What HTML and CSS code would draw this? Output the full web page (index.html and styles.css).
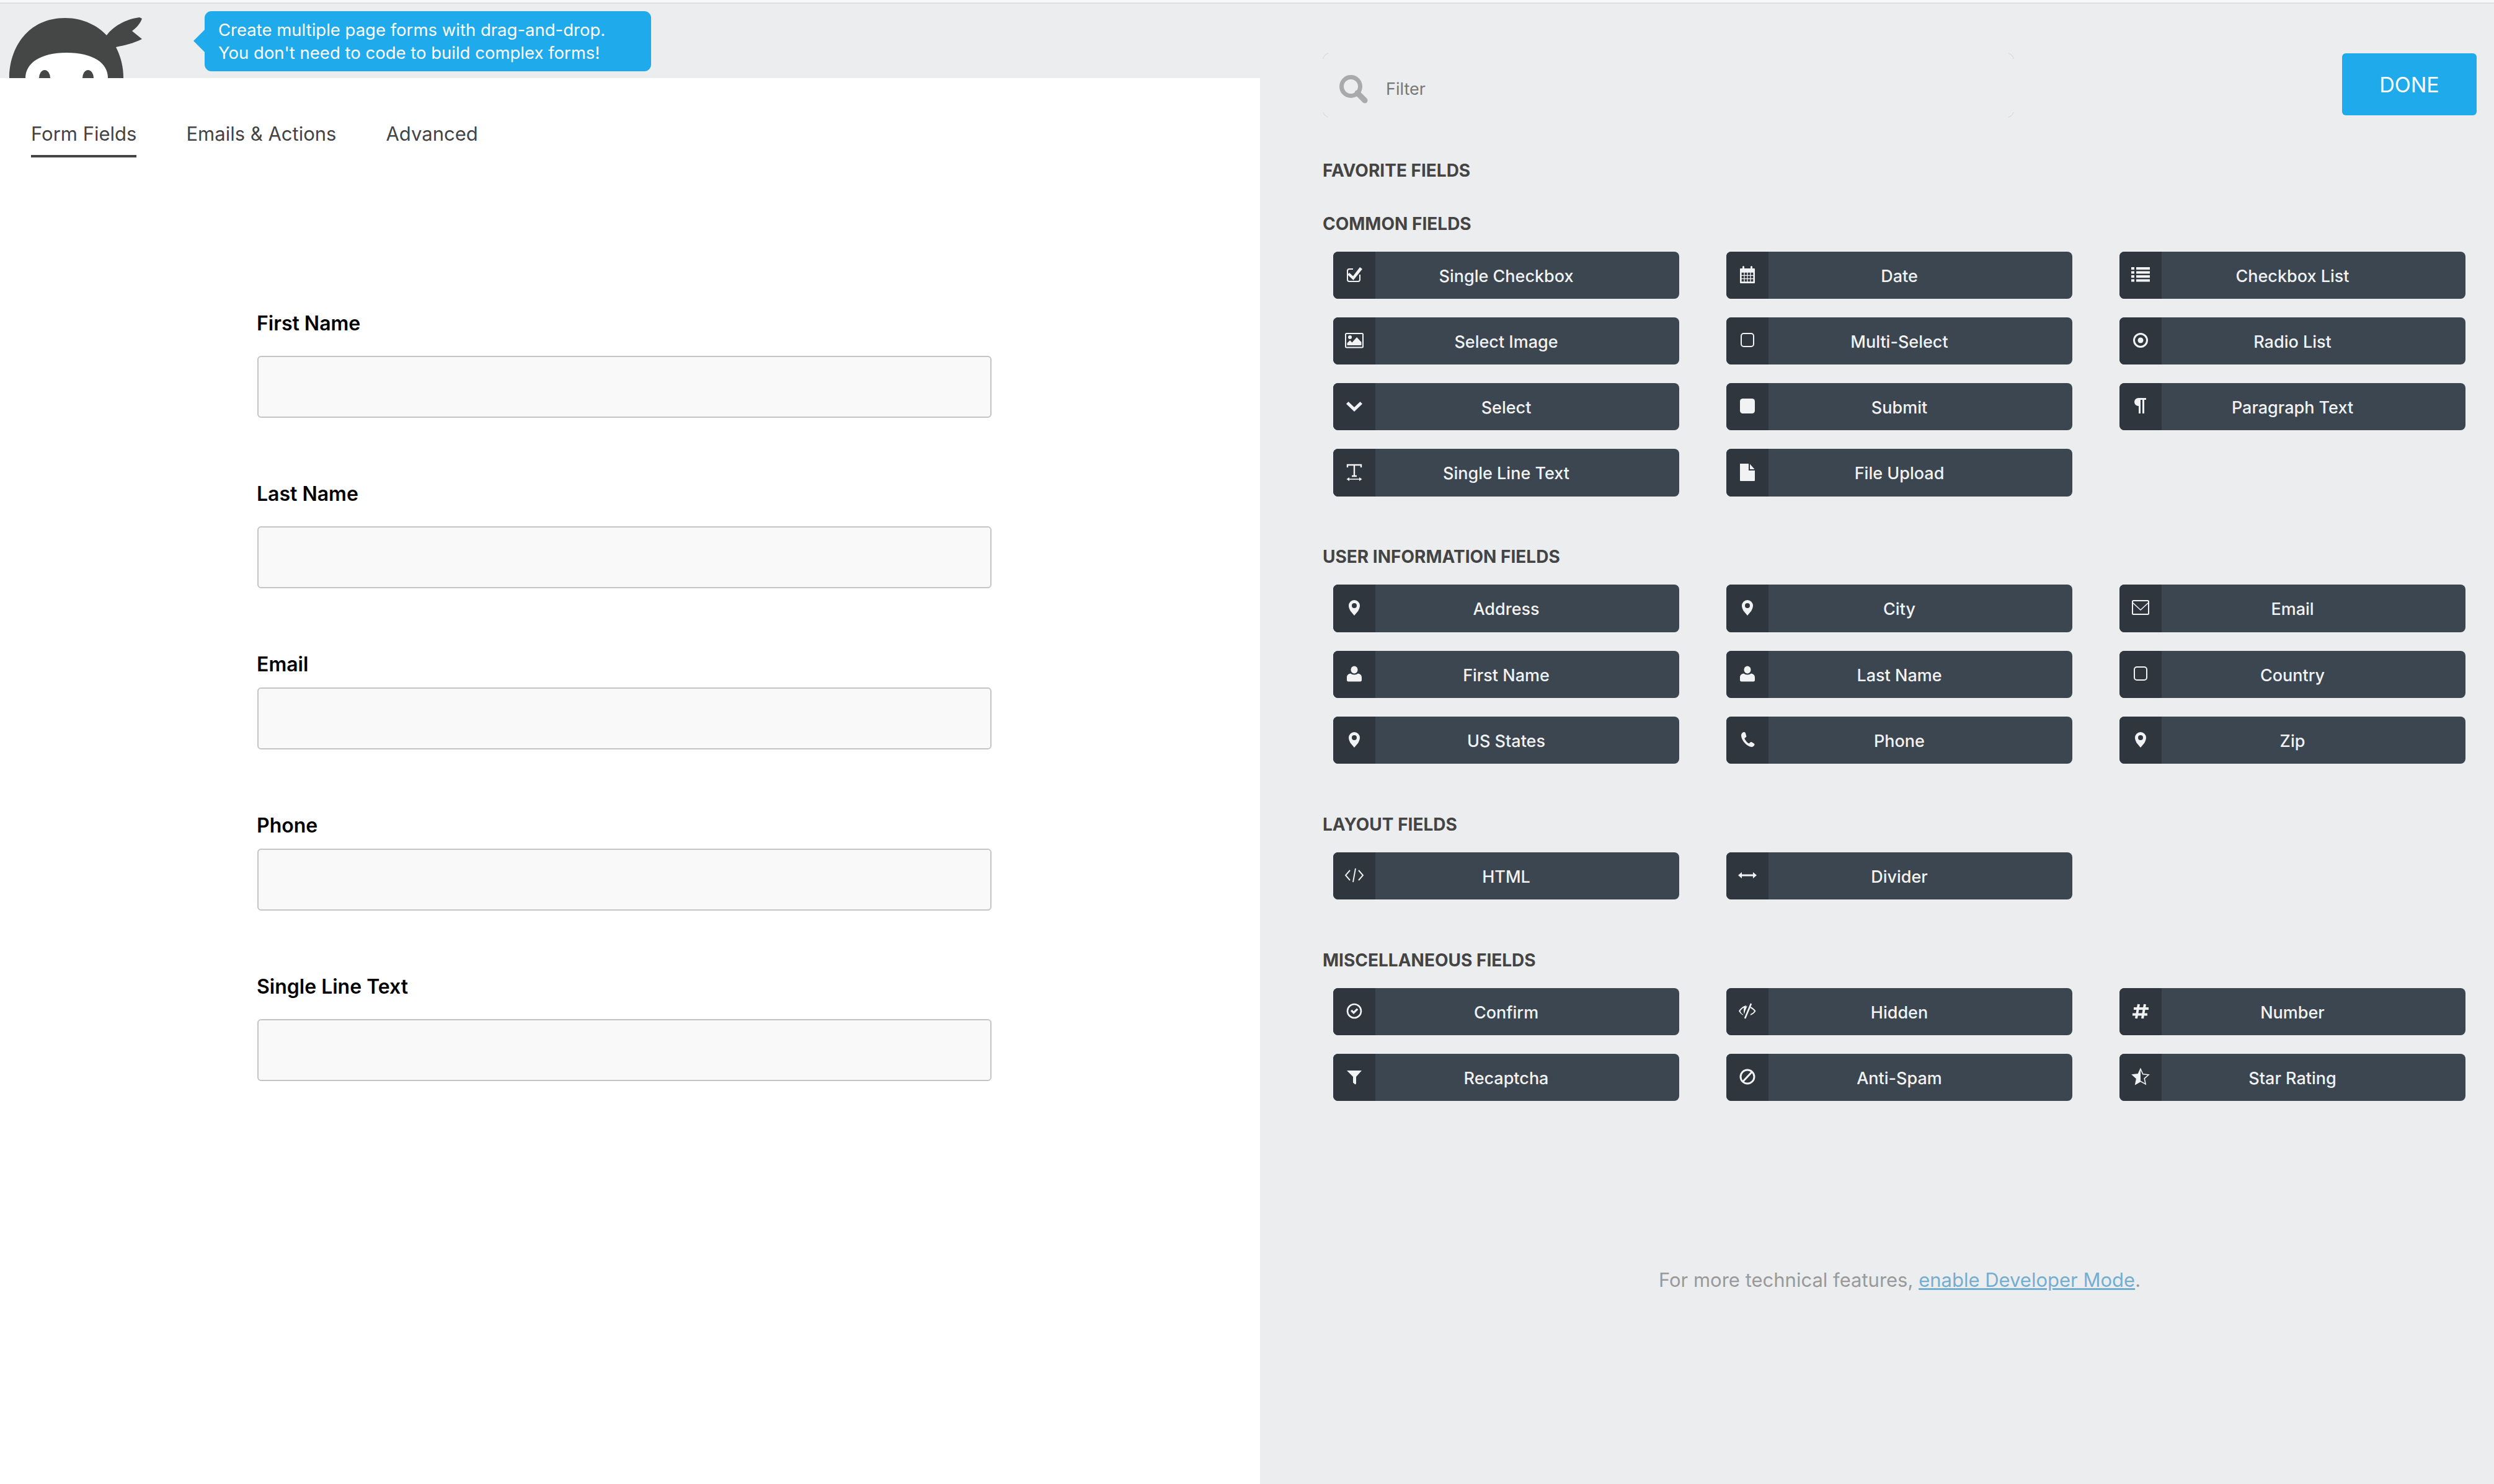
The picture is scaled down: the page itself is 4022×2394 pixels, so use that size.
FILE: index.html
```html
<!doctype html>
<html>
    <head>
        <meta charset="utf-8" />
        <title>Form Builder</title>
        <link rel="stylesheet" href="styles.css">
    </head>
    <body>
        <!-- Icon sprite, 32x32 boxes -->
        <svg class="sprite" xmlns="http://www.w3.org/2000/svg">
            <symbol id="i-check-square" viewBox="0 0 32 32">
                <path d="M14 7H8a3 3 0 0 0-3 3v14a3 3 0 0 0 3 3h14a3 3 0 0 0 3-3v-8" fill="none" stroke="currentColor" stroke-width="2"/>
                <path d="M8 13l6 5.500L25 4l4 3-14.500 18L5 16z" fill="currentColor"/>
            </symbol>
            <symbol id="i-calendar" viewBox="0 0 32 32">
                <path d="M5 6h3V3.500a1.500 1.500 0 0 1 3 0V6h10V3.500a1.500 1.500 0 0 1 3 0V6h3a1 1 0 0 1 1 1v22a1 1 0 0 1-1 1H5a1 1 0 0 1-1-1V7a1 1 0 0 1 1-1z" fill="currentColor"/>
                <path d="M6 12h20v16H6z" fill="#30363e"/>
                <path d="M6 12h20M6 17.300h20M6 22.600h20M6 28h20M6 12v16M11 12v16M16 12v16M21 12v16M26 12v16" stroke="currentColor" stroke-width="1.300" fill="none"/>
            </symbol>
            <symbol id="i-list" viewBox="0 0 32 32">
                <path d="M1 4h5v4H1zM9 4h22v4H9zM1 10.500h5v4H1zM9 10.500h22v4H9zM1 17h5v4H1zM9 17h22v4H9zM1 23.500h5v4H1zM9 23.500h22v4H9z" fill="currentColor"/>
            </symbol>
            <symbol id="i-image" viewBox="0 0 32 32">
                <rect x="2" y="5" width="28" height="22.500" rx="1.500" fill="none" stroke="currentColor" stroke-width="2"/>
                <circle cx="9" cy="11" r="3" fill="currentColor"/>
                <path d="M4.500 24v-3.500L9 16l3.500 3.500L20 11l7.500 8v5z" fill="currentColor"/>
            </symbol>
            <symbol id="i-square-o" viewBox="0 0 32 32">
                <rect x="6" y="5" width="20" height="21" rx="4" fill="none" stroke="currentColor" stroke-width="2"/>
            </symbol>
            <symbol id="i-chevron" viewBox="0 0 32 32">
                <path d="M3 12.500L6.500 9 16 18l9.500-9 3.500 3.500L16 25z" fill="currentColor"/>
            </symbol>
            <symbol id="i-square" viewBox="0 0 32 32">
                <rect x="4" y="4" width="24" height="24" rx="4.500" fill="currentColor"/>
            </symbol>
            <symbol id="i-paragraph" viewBox="0 0 32 32">
                <path d="M25 3v3h-3v22h-3V6h-3v22h-3V16a6.500 6.500 0 0 1-7-6.500A6.500 6.500 0 0 1 13 3z" fill="currentColor"/>
            </symbol>
            <symbol id="i-text" viewBox="0 0 32 32">
                <path d="M5 8V4h22v4M16 4v18M12 22h8" fill="none" stroke="currentColor" stroke-width="2.400"/>
                <path d="M6 27h20" stroke="currentColor" stroke-width="1.600"/>
                <path d="M3.500 27L8 24v6zM28.500 27L24 24v6z" fill="currentColor"/>
            </symbol>
            <symbol id="i-file" viewBox="0 0 32 32">
                <path d="M4 2h14v11h10v16a1 1 0 0 1-1 1H5a1 1 0 0 1-1-1z" fill="currentColor"/>
                <path d="M20 2.500L27.500 11H20z" fill="currentColor"/>
            </symbol>
            <symbol id="i-pin" viewBox="0 0 32 32">
                <path fill-rule="evenodd" d="M16 4a9 9 0 0 1 9 9c0 3-1.500 6-2.700 8.500L16 29l-6.300-7.500C8.500 19 7 16 7 13a9 9 0 0 1 9-9zm0 5a4 4 0 1 0 0 8 4 4 0 0 0 0-8z" fill="currentColor"/>
            </symbol>
            <symbol id="i-user" viewBox="0 0 32 32">
                <ellipse cx="16" cy="9.500" rx="5.500" ry="6" fill="currentColor"/>
                <path d="M4 26v-4c0-4 2.500-6 6-6.500 1.500 1.300 3.500 2 6 2s4.500-.7 6-2c3.500.5 6 2.500 6 6.500v4a2.500 2.500 0 0 1-2.500 2.500h-19A2.500 2.500 0 0 1 4 26z" fill="currentColor"/>
            </symbol>
            <symbol id="i-envelope" viewBox="0 0 32 32">
                <rect x="3" y="5" width="26" height="22" rx="1.500" fill="none" stroke="currentColor" stroke-width="2"/>
                <path d="M3 8l13 12L29 8" fill="none" stroke="currentColor" stroke-width="1.600"/>
            </symbol>
            <symbol id="i-target" viewBox="0 0 32 32">
                <circle cx="16" cy="16" r="10.500" fill="none" stroke="currentColor" stroke-width="3"/>
                <circle cx="16" cy="16" r="4.500" fill="currentColor"/>
            </symbol>
            <symbol id="i-phone" viewBox="0 0 32 32">
                <path d="M10.500 4c1 0 2 .5 2.300 1.500l1.500 5c.2.800-.3 1.500-1 2l-2 1.500c1 3 4 7 7.200 8.500l2-2c.7-.6 1.400-.8 2.200-.4l4 2.500c.8.500 1 1.300.7 2.200-1 2.200-3 3.700-5.400 3.200C14 26.500 6.500 17 6 10c-.2-3 2-6 4.500-6z" fill="currentColor"/>
            </symbol>
            <symbol id="i-code" viewBox="0 0 32 32">
                <path d="M9 8l-7 8 7 8M23 8l7 8-7 8M18 5l-4 22" fill="none" stroke="currentColor" stroke-width="1.900"/>
            </symbol>
            <symbol id="i-arrows" viewBox="0 0 32 32">
                <path d="M6 14.500h20v3H6z" fill="currentColor"/>
                <path d="M1 16l6-5v10zM31 16l-6-5v10z" fill="currentColor"/>
            </symbol>
            <symbol id="i-check-circle" viewBox="0 0 32 32">
                <circle cx="16" cy="16" r="11" fill="none" stroke="currentColor" stroke-width="2.600"/>
                <path d="M10 16l2.300-2.300 2.700 2.800 5-5 2.300 2.300-7.300 7.300z" fill="currentColor"/>
            </symbol>
            <symbol id="i-eye-slash" viewBox="0 0 32 32">
                <path d="M14 7C9 8 5 11.500 2 16c1.800 3 4 5.300 7 6.700L9.500 22C7 20.500 5.500 18.500 4.500 16 6 13.500 8 11.500 10.500 10.500 9.500 15 10 19 11 21z" fill="currentColor"/>
                <path d="M21 9c3.500 1.500 6.500 4 8.500 7-2 3.300-5 5.800-9 7l1-2.500c2.500-1 4.500-2.500 5.500-4.500-1.500-2-3.500-3.500-6-4.500z" fill="currentColor"/>
                <path d="M22 4L12 28" stroke="currentColor" stroke-width="2.600"/>
                <path d="M13 9.500a7 7 0 0 0-2 9l5-11z" fill="currentColor"/>
            </symbol>
            <symbol id="i-hash" viewBox="0 0 32 32">
                <path d="M13 5l-4 23M23 5l-4 23M5 12h24M3 21.500h24" fill="none" stroke="currentColor" stroke-width="4"/>
            </symbol>
            <symbol id="i-funnel" viewBox="0 0 32 32">
                <path d="M4 6h24L19 16v11l-1.500 1.500-3.500-3V16z" fill="currentColor"/>
            </symbol>
            <symbol id="i-ban" viewBox="0 0 32 32">
                <circle cx="16" cy="16" r="11" fill="none" stroke="currentColor" stroke-width="3"/>
                <path d="M8.500 24L23.500 8" stroke="currentColor" stroke-width="3"/>
            </symbol>
            <symbol id="i-star-half" viewBox="0 0 32 32">
                <path d="M16 3.500l3.800 8.300 9.200 1-6.800 6.100 1.900 9-8.100-4.600-8.100 4.600 1.900-9L3 12.800l9.200-1z" fill="none" stroke="currentColor" stroke-width="1.600"/>
                <path d="M16 3.500v20.300l-8.100 4.600 1.900-9L3 12.800l9.200-1z" fill="currentColor"/>
            </symbol>
        </svg>

        <div class="top-strip"></div>

        <div class="app">
            <!-- Form preview -->
            <div class="builder">
                <header class="builder-header">
                    <svg class="logo" viewBox="0 0 229 99" xmlns="http://www.w3.org/2000/svg">
                        <path d="M15 99C15 50 45 2 105 2c30 0 53 13 67 28 10-14 30-26 53-29l4 2c-3 8-8 14-16 20l16 13c-14 7-28 10-42 13 8 16 12 32 12 50z" fill="#444746"/>
                        <path d="M41 99c0-24 24-41 66-41 44 0 67 17 67 41z" fill="#fff"/>
                        <ellipse cx="72" cy="99" rx="9" ry="13" fill="#444746"/>
                        <ellipse cx="142" cy="99" rx="9" ry="13" fill="#444746"/>
                    </svg>
                    <div class="tip">
                        Create multiple page forms with drag-and-drop.<br>
                        You don't need to code to build complex forms!
                    </div>
                </header>

                <nav class="tabs">
                    <a class="tab is-active">Form Fields</a>
                    <a class="tab">Emails &amp; Actions</a>
                    <a class="tab">Advanced</a>
                </nav>

                <form class="preview">
                    <div class="preview-field">
                        <label class="preview-label">First Name</label>
                        <input class="preview-input" type="text">
                    </div>
                    <div class="preview-field">
                        <label class="preview-label">Last Name</label>
                        <input class="preview-input" type="text">
                    </div>
                    <div class="preview-field is-tight">
                        <label class="preview-label">Email</label>
                        <input class="preview-input" type="text">
                    </div>
                    <div class="preview-field is-tight">
                        <label class="preview-label">Phone</label>
                        <input class="preview-input" type="text">
                    </div>
                    <div class="preview-field">
                        <label class="preview-label">Single Line Text</label>
                        <input class="preview-input" type="text">
                    </div>
                </form>
            </div>

            <!-- Field drawer -->
            <aside class="drawer">
                <div class="drawer-top">
                    <div class="filter">
                        <svg class="filter-icon" viewBox="0 0 46 46" xmlns="http://www.w3.org/2000/svg">
                            <circle cx="18.500" cy="18.500" r="15" fill="none" stroke="#aaa" stroke-width="7"/>
                            <path d="M29 29l12 12" stroke="#aaa" stroke-width="9" stroke-linecap="round"/>
                        </svg>
                        <span class="filter-text">Filter</span>
                    </div>
                    <button class="done" type="button">DONE</button>
                </div>

                <section class="group">
                    <h3 class="group-title">FAVORITE FIELDS</h3>
                </section>

                <section class="group">
                    <h3 class="group-title">COMMON FIELDS</h3>
                    <div class="field-grid">
                        <div class="field"><span class="field-icon"><svg><use href="#i-check-square"/></svg></span><span class="field-name">Single Checkbox</span></div>
                        <div class="field"><span class="field-icon"><svg><use href="#i-calendar"/></svg></span><span class="field-name">Date</span></div>
                        <div class="field"><span class="field-icon"><svg><use href="#i-list"/></svg></span><span class="field-name">Checkbox List</span></div>
                        <div class="field"><span class="field-icon"><svg><use href="#i-image"/></svg></span><span class="field-name">Select Image</span></div>
                        <div class="field"><span class="field-icon"><svg><use href="#i-square-o"/></svg></span><span class="field-name">Multi-Select</span></div>
                        <div class="field"><span class="field-icon"><svg><use href="#i-target"/></svg></span><span class="field-name">Radio List</span></div>
                        <div class="field"><span class="field-icon"><svg><use href="#i-chevron"/></svg></span><span class="field-name">Select</span></div>
                        <div class="field"><span class="field-icon"><svg><use href="#i-square"/></svg></span><span class="field-name">Submit</span></div>
                        <div class="field"><span class="field-icon"><svg><use href="#i-paragraph"/></svg></span><span class="field-name">Paragraph Text</span></div>
                        <div class="field"><span class="field-icon"><svg><use href="#i-text"/></svg></span><span class="field-name">Single Line Text</span></div>
                        <div class="field"><span class="field-icon"><svg><use href="#i-file"/></svg></span><span class="field-name">File Upload</span></div>
                    </div>
                </section>

                <section class="group">
                    <h3 class="group-title">USER INFORMATION FIELDS</h3>
                    <div class="field-grid">
                        <div class="field"><span class="field-icon"><svg><use href="#i-pin"/></svg></span><span class="field-name">Address</span></div>
                        <div class="field"><span class="field-icon"><svg><use href="#i-pin"/></svg></span><span class="field-name">City</span></div>
                        <div class="field"><span class="field-icon"><svg><use href="#i-envelope"/></svg></span><span class="field-name">Email</span></div>
                        <div class="field"><span class="field-icon"><svg><use href="#i-user"/></svg></span><span class="field-name">First Name</span></div>
                        <div class="field"><span class="field-icon"><svg><use href="#i-user"/></svg></span><span class="field-name">Last Name</span></div>
                        <div class="field"><span class="field-icon"><svg><use href="#i-square-o"/></svg></span><span class="field-name">Country</span></div>
                        <div class="field"><span class="field-icon"><svg><use href="#i-pin"/></svg></span><span class="field-name">US States</span></div>
                        <div class="field"><span class="field-icon"><svg><use href="#i-phone"/></svg></span><span class="field-name">Phone</span></div>
                        <div class="field"><span class="field-icon"><svg><use href="#i-pin"/></svg></span><span class="field-name">Zip</span></div>
                    </div>
                </section>

                <section class="group">
                    <h3 class="group-title">LAYOUT FIELDS</h3>
                    <div class="field-grid">
                        <div class="field"><span class="field-icon"><svg><use href="#i-code"/></svg></span><span class="field-name">HTML</span></div>
                        <div class="field"><span class="field-icon"><svg><use href="#i-arrows"/></svg></span><span class="field-name">Divider</span></div>
                    </div>
                </section>

                <section class="group">
                    <h3 class="group-title">MISCELLANEOUS FIELDS</h3>
                    <div class="field-grid">
                        <div class="field"><span class="field-icon"><svg><use href="#i-check-circle"/></svg></span><span class="field-name">Confirm</span></div>
                        <div class="field"><span class="field-icon"><svg><use href="#i-eye-slash"/></svg></span><span class="field-name">Hidden</span></div>
                        <div class="field"><span class="field-icon"><svg><use href="#i-hash"/></svg></span><span class="field-name">Number</span></div>
                        <div class="field"><span class="field-icon"><svg><use href="#i-funnel"/></svg></span><span class="field-name">Recaptcha</span></div>
                        <div class="field"><span class="field-icon"><svg><use href="#i-ban"/></svg></span><span class="field-name">Anti-Spam</span></div>
                        <div class="field"><span class="field-icon"><svg><use href="#i-star-half"/></svg></span><span class="field-name">Star Rating</span></div>
                    </div>
                </section>

                <p class="dev-note">For more technical features, <a class="dev-link" href="#">enable Developer Mode</a>.</p>
            </aside>
        </div>
    </body>
</html>
```

FILE: styles.css
```css
* {
    box-sizing: border-box;
}

html,
body {
    height: 100%;
}

body {
    margin: 0;
    display: flex;
    flex-direction: column;
    overflow: hidden;
    background: #ecedef;
    font-family: Inter, "Liberation Sans", sans-serif;
}

.sprite {
    display: none;
}

.top-strip {
    height: 6px;
    flex: none;
    background: #f7f7f7;
    border-bottom: 2px solid #dfe0e2;
}

.app {
    display: flex;
    flex: 1;
    min-height: 0;
}

/* Left side */
.builder {
    width: 2032px;
    flex: none;
    background: #fff;
}

.builder-header {
    display: flex;
    align-items: flex-start;
    height: 120px;
    background: #ecedef;
    overflow: hidden;
}

.logo {
    width: 229px;
    height: 99px;
    flex: none;
    margin-top: 21px;
}

.tip {
    position: relative;
    width: 720px;
    height: 97px;
    margin: 12px 0 0 101px;
    padding: 12px 22px 0;
    border-radius: 11px;
    background: #1eaaeb;
    color: #fff;
    font-size: 27.500px;
    line-height: 37px;
}

.tip::before {
    content: "";
    position: absolute;
    left: -18px;
    top: 30px;
    border-style: solid;
    border-width: 18px 18px 18px 0;
    border-color: transparent #1eaaeb transparent transparent;
}

.tabs {
    display: flex;
    gap: 80px;
    padding: 70px 0 0 50px;
}

.tab {
    padding-bottom: 14px;
    border-bottom: 4px solid transparent;
    color: #444;
    font-size: 31px;
    line-height: 40px;
}

.tab.is-active {
    border-bottom-color: #444;
}

.preview {
    padding: 250px 0 0 414px;
}

.preview-field {
    margin-bottom: 105px;
}

.preview-label {
    display: block;
    margin-bottom: 34px;
    color: #000;
    font-size: 32px;
    font-weight: 600;
    line-height: 36px;
}

.preview-field.is-tight .preview-label {
    margin-bottom: 19px;
}

.preview-input {
    display: block;
    width: 1184px;
    height: 100px;
    margin-left: 1px;
    border: 2px solid #c4c4c4;
    border-radius: 6px;
    background: #f9f9f9;
}

/* Right side */
.drawer {
    flex: 1;
    min-width: 0;
    padding: 79px 28px 0 101px;
}

.drawer-top {
    display: flex;
    justify-content: space-between;
    align-items: flex-start;
    margin-bottom: 68px;
}

/* Only the corners of the box are visible, the covers hide its edges */
.filter {
    position: relative;
    display: flex;
    align-items: center;
    gap: 29px;
    width: 1115px;
    height: 105px;
    padding: 12px 0 0 26px;
    border: 1px solid #cfd1d4;
    border-radius: 12px;
}

.filter::before,
.filter::after {
    content: "";
    position: absolute;
    background: #ecedef;
}

.filter::before {
    left: 8px;
    right: 8px;
    top: -2px;
    bottom: -2px;
}

.filter::after {
    left: -2px;
    right: -2px;
    top: 9px;
    bottom: 8px;
}

.filter-icon,
.filter-text {
    position: relative;
    z-index: 1;
}

.filter-icon {
    width: 46px;
    height: 46px;
}

.filter-text {
    color: #777;
    font-size: 27px;
}

.done {
    width: 217px;
    height: 100px;
    margin-top: 1px;
    border: 0;
    border-radius: 6px;
    background: #1eaaeb;
    color: #fff;
    font-family: inherit;
    font-size: 34px;
}

.group {
    margin-bottom: 51.500px;
}

.group-title {
    margin: 0;
    color: #444;
    font-size: 28px;
    font-weight: 700;
    line-height: 34px;
}

.field-grid {
    display: grid;
    grid-template-columns: repeat(3, 558px);
    column-gap: 76px;
    row-gap: 30px;
    margin-left: 17px;
    padding: 28px 0 29px;
}

.field {
    display: flex;
    height: 76.330px;
    overflow: hidden;
    border-radius: 8px;
    background: #3c4650;
    color: #f1f2f3;
}

.field-icon {
    display: flex;
    align-items: center;
    justify-content: center;
    width: 68px;
    flex: none;
    background: #30363e;
}

.field-icon svg {
    width: 32px;
    height: 32px;
    margin-bottom: 2px;
}

.field-name {
    flex: 1;
    padding: 3px 68px 0 0;
    font-size: 27px;
    font-weight: 500;
    line-height: 73px;
    text-align: center;
}

.dev-note {
    margin: 240px 0 0;
    color: #999;
    font-size: 31px;
    line-height: 40px;
    text-align: center;
}

.dev-link {
    color: #74aecf;
}
```
